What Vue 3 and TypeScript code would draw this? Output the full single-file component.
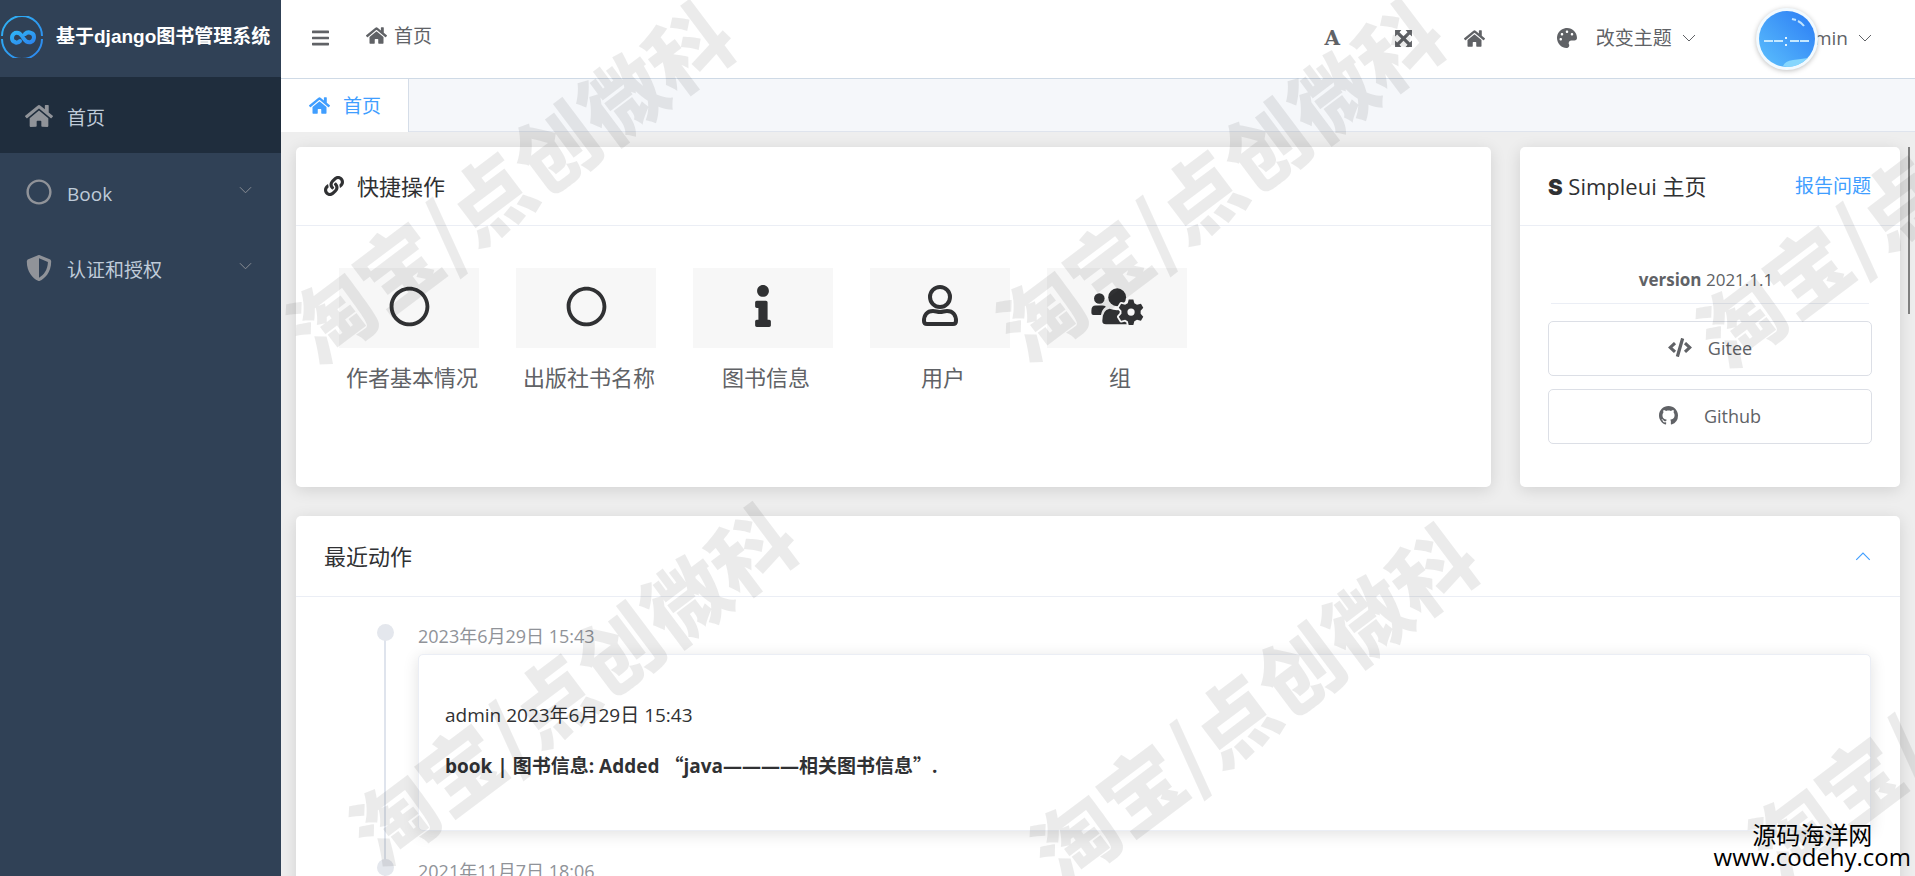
<script setup lang="ts">
import { h, ref } from 'vue'
import type { FunctionalComponent } from 'vue'

interface Glyph {
  box: string
  path: string
}

const glyphs: Record<string, Glyph> = {
  home: {
    box: '0 0 576 512',
    path: 'M280.37 148.26L96 300.11V464a16 16 0 0 0 16 16l112.06-.29a16 16 0 0 0 15.92-16V368a16 16 0 0 1 16-16h64a16 16 0 0 1 16 16v95.64a16 16 0 0 0 16 16.05L464 480a16 16 0 0 0 16-16V300L295.67 148.26a12.19 12.19 0 0 0-15.3 0zM571.6 251.47L488 182.56V44.05a12 12 0 0 0-12-12h-56a12 12 0 0 0-12 12v72.61L318.47 43a48 48 0 0 0-61 0L4.34 251.47a12 12 0 0 0-1.6 16.9l25.5 31A12 12 0 0 0 45.15 301l235.22-193.74a12.19 12.19 0 0 1 15.3 0L530.9 301a12 12 0 0 0 16.9-1.6l25.5-31a12 12 0 0 0-1.7-16.93z',
  },
  shield: {
    box: '0 0 512 512',
    path: 'M466.5 83.7l-192-80a48.15 48.15 0 0 0-36.9 0l-192 80C27.7 91.1 16 108.6 16 128c0 198.5 114.5 335.7 221.5 380.3 11.8 4.9 25.1 4.9 36.9 0C360.1 472.6 496 349.3 496 128c0-19.4-11.7-36.9-29.5-44.3zM256.1 446.3l-.1-381 175.9 73.3c-3.3 151.4-82.1 261.1-175.8 307.7z',
  },
  circle: {
    box: '0 0 512 512',
    path: 'M256 8C119 8 8 119 8 256s111 248 248 248 248-111 248-248S393 8 256 8zm0 448c-110.5 0-200-89.5-200-200S145.500 56 256 56s200 89.5 200 200-89.5 200-200 200z',
  },
  bars: {
    box: '0 0 448 512',
    path: 'M16 132h416c8.800 0 16-7.200 16-16V76c0-8.800-7.200-16-16-16H16C7.200 60 0 67.200 0 76v40c0 8.800 7.200 16 16 16zm0 160h416c8.800 0 16-7.200 16-16v-40c0-8.800-7.200-16-16-16H16c-8.800 0-16 7.200-16 16v40c0 8.800 7.200 16 16 16zm0 160h416c8.800 0 16-7.200 16-16v-40c0-8.800-7.200-16-16-16H16c-8.800 0-16 7.200-16 16v40c0 8.800 7.200 16 16 16z',
  },
  link: {
    box: '0 0 512 512',
    path: 'M326.612 185.391c59.747 59.809 58.927 155.698.36 214.590-.11.12-.24.25-.36.37l-67.2 67.2c-59.270 59.270-155.699 59.262-214.960 0-59.270-59.260-59.270-155.700 0-214.960l37.106-37.106c9.840-9.840 26.786-3.300 27.294 10.606.648 17.722 3.826 35.527 9.690 52.721 1.986 5.822.567 12.262-3.783 16.612l-13.087 13.087c-28.026 28.026-28.905 73.660-1.155 101.960 28.024 28.579 74.086 28.749 102.325.51l67.2-67.190c28.191-28.191 28.073-73.757 0-101.830-3.701-3.694-7.429-6.564-10.341-8.569a16.037 16.037 0 0 1-6.947-12.606c-.396-10.567 3.348-21.456 11.698-29.806l21.054-21.055c5.521-5.521 14.182-6.199 20.584-1.731a152.482 152.482 0 0 1 20.522 17.197zM467.547 44.449c-59.261-59.262-155.690-59.270-214.960 0l-67.2 67.2c-.12.12-.25.25-.36.37-58.566 58.892-59.387 154.781.36 214.590a152.454 152.454 0 0 0 20.521 17.196c6.402 4.468 15.064 3.789 20.584-1.731l21.054-21.055c8.350-8.350 12.094-19.239 11.698-29.806a16.037 16.037 0 0 0-6.947-12.606c-2.912-2.005-6.640-4.875-10.341-8.569-28.073-28.073-28.191-73.639 0-101.830l67.2-67.190c28.239-28.239 74.300-28.069 102.325.51 27.750 28.300 26.872 73.934-1.155 101.960l-13.087 13.087c-4.350 4.350-5.769 10.790-3.783 16.612 5.864 17.194 9.042 34.999 9.690 52.721.509 13.906 17.454 20.446 27.294 10.606l37.106-37.106c59.271-59.259 59.271-155.699.001-214.959z',
  },
  palette: {
    box: '0 0 512 512',
    path: 'M204.3 5C104.900 24.400 24.800 104.300 5.200 203.400c-37 187 131.700 326.400 258.800 306.700 41.200-6.400 61.400-54.600 42.500-91.700-23.100-45.400 9.900-98.400 60.900-98.400h79.700c35.800 0 64.800-29.600 64.900-65.300C511.500 97.100 368.100-26.900 204.300 5zM96 320c-17.700 0-32-14.300-32-32s14.300-32 32-32 32 14.300 32 32-14.300 32-32 32zm32-128c-17.700 0-32-14.300-32-32s14.300-32 32-32 32 14.300 32 32-14.300 32-32 32zm128-64c-17.700 0-32-14.300-32-32s14.300-32 32-32 32 14.300 32 32-14.300 32-32 32zm128 64c-17.700 0-32-14.300-32-32s14.300-32 32-32 32 14.300 32 32-14.300 32-32 32z',
  },
  expand: {
    box: '0 0 18 18',
    path: 'M1 1h6L5.200 3 9 6.900 12.800 3 11 1h6v6l-2-1.800L11.100 9l3.900 3.800 2-1.800v6h-6l1.800-2L9 11.100 5.200 15 7 17H1v-6l2 1.800L6.900 9 3 5.200 1 7z',
  },
  info: {
    box: '0 0 192 512',
    path: 'M20 424.229h20V279.771H20c-11.046 0-20-8.954-20-20V212c0-11.046 8.954-20 20-20h112c11.046 0 20 8.954 20 20v212.229h20c11.046 0 20 8.954 20 20V492c0 11.046-8.954 20-20 20H20c-11.046 0-20-8.954-20-20v-47.771c0-11.046 8.954-20 20-20zM96 0C56.235 0 24 32.235 24 72s32.235 72 72 72 72-32.235 72-72S135.764 0 96 0z',
  },
  code: {
    box: '0 0 640 512',
    path: 'M278.900 511.500l-61-17.700c-6.400-1.800-10-8.500-8.200-14.900L346.200 8.700c1.800-6.400 8.500-10 14.900-8.200l61 17.700c6.400 1.800 10 8.500 8.200 14.900L293.800 503.300c-1.900 6.400-8.500 10.100-14.900 8.200zm-114-112.200l43.500-46.400c4.600-4.900 4.300-12.700-.8-17.200L117 256l90.600-79.700c5.100-4.500 5.500-12.300.8-17.200l-43.500-46.400c-4.500-4.800-12.100-5.100-17-.5L3.800 247.200c-5.100 4.700-5.100 12.800 0 17.500l144.100 135.100c4.900 4.600 12.500 4.400 17-.5zm327.200.6l144.100-135.100c5.100-4.700 5.100-12.800 0-17.500L492.100 112.100c-4.800-4.500-12.400-4.300-17 .5L431.600 159c-4.600 4.900-4.300 12.700.8 17.200L523 256l-90.600 79.700c-5.100 4.500-5.500 12.300-.8 17.200l43.500 46.400c4.500 4.900 12.100 5.100 17 .6z',
  },
  github: {
    box: '0 0 16 16',
    path: 'M8 0C3.580 0 0 3.580 0 8c0 3.540 2.290 6.530 5.470 7.590.4.07.55-.17.55-.38 0-.19-.01-.82-.01-1.490-2.010.37-2.530-.49-2.690-.94-.09-.23-.48-.94-.82-1.130-.28-.15-.68-.52-.01-.53.63-.01 1.080.58 1.230.82.72 1.210 1.870.87 2.330.66.07-.52.28-.87.51-1.070-1.780-.2-3.640-.89-3.640-3.950 0-.87.31-1.590.82-2.150-.08-.2-.36-1.020.08-2.120 0 0 .67-.21 2.200.82.64-.18 1.320-.27 2-.27.68 0 1.360.09 2 .27 1.530-1.040 2.200-.82 2.200-.82.44 1.100.16 1.920.08 2.120.51.56.82 1.270.82 2.150 0 3.070-1.870 3.750-3.650 3.950.29.25.54.73.54 1.480 0 1.070-.01 1.930-.01 2.200 0 .21.15.46.55.38A8.013 8.013 0 0 0 16 8c0-4.420-3.580-8-8-8z',
  },
}

const Icon: FunctionalComponent<{ name: string }> = (props) =>
  h('svg', { viewBox: glyphs[props.name].box, fill: 'currentColor', 'aria-hidden': 'true' }, [
    h('path', { d: glyphs[props.name].path }),
  ])
Icon.props = ['name']

const Chevron: FunctionalComponent = () =>
  h('svg', { viewBox: '0 0 14 8', fill: 'none', stroke: 'currentColor', 'aria-hidden': 'true' }, [
    h('path', { d: 'M1 1l6 6 6-6' }),
  ])

const menu = [
  { label: '首页', icon: 'home', active: true, children: false },
  { label: 'Book', icon: 'circle', active: false, children: true },
  { label: '认证和授权', icon: 'shield', active: false, children: true },
]

const shortcuts = [
  { label: '作者基本情况', icon: 'circle' },
  { label: '出版社书名称', icon: 'circle' },
  { label: '图书信息', icon: 'info' },
  { label: '用户', icon: 'user' },
  { label: '组', icon: 'group' },
]

const actions = [
  {
    time: '2023年6月29日 15:43',
    user: 'admin',
    target: 'book | 图书信息: Added ',
    name: 'java————相关图书信息',
    end: '.',
  },
  { time: '2021年11月7日 18:06', user: 'admin', target: '', name: '', end: '' },
]

const marks = [
  { x: 508, y: 180 },
  { x: 1218, y: 178 },
  { x: 1918, y: 184 },
  { x: 571, y: 682 },
  { x: 1252, y: 702 },
  { x: 1970, y: 695 },
]

const open = ref(true)
</script>

<template>
  <div class="shell">
    <aside class="sidebar">
      <div class="brand">
        <svg class="logo" viewBox="0 0 42 42" fill="none" aria-hidden="true">
          <defs>
            <linearGradient id="brandTone" x1="0" y1="0" x2="1" y2="1">
              <stop offset="0" stop-color="#2fb4f5" />
              <stop offset="1" stop-color="#2d86ee" />
            </linearGradient>
          </defs>
          <path d="M1 20a20 20 0 0 1 40 0M41 23a20 20 0 0 1-40 0" stroke="url(#brandTone)" stroke-width="2" />
          <path d="M19 25c-2 2-4 2-5 1-4-1-4-7 0-9 3-1 5 0 7 3l2 3c2 3 4 4 7 3 4-2 4-8 0-9-2-1-4-1-6 1" stroke="url(#brandTone)" stroke-width="4" stroke-linecap="round" />
        </svg>
        <span class="brand-name">基于django图书管理系统</span>
      </div>
      <nav class="menu">
        <a v-for="m in menu" :key="m.label" href="#" class="menu-item" :class="{ active: m.active }">
          <Icon class="menu-icon" :name="m.icon" />
          <span class="menu-text">{{ m.label }}</span>
          <Chevron v-if="m.children" class="menu-arrow" />
        </a>
      </nav>
    </aside>

    <div class="main">
      <header class="topbar">
        <button class="plain" type="button" aria-label="折叠菜单"><Icon class="ic-bars" name="bars" /></button>
        <a class="crumb" href="#"><Icon class="ic-home" name="home" />首页</a>
        <div class="tools">
          <button class="plain tool letter" type="button">A</button>
          <button class="plain tool" type="button" aria-label="全屏"><Icon class="ic-expand" name="expand" /></button>
          <button class="plain tool" type="button" aria-label="主页"><Icon class="ic-home" name="home" /></button>
          <button class="plain theme" type="button">
            <Icon class="ic-palette" name="palette" />改变主题<Chevron class="ic-down" />
          </button>
          <button class="plain user" type="button">admin<Chevron class="ic-down" /></button>
        </div>
        <div class="ball">
          <svg viewBox="0 0 56 56" aria-hidden="true">
            <defs>
              <linearGradient id="ballTone" x1="1" y1="0" x2="0" y2="1">
                <stop offset="0" stop-color="#2a7bf4" />
                <stop offset="1" stop-color="#5cc0fd" />
              </linearGradient>
            </defs>
            <circle cx="28" cy="28" r="28" fill="url(#ballTone)" />
            <path d="M24 55q2-5 10-6t15-2q-9 9-21 9z" fill="#86d6fd" />
            <path d="M33 8l4 1M39 10q4 2 6 5" stroke="#bfe3ff" stroke-width="2" fill="none" />
            <path d="M5 30h9M15 30h9M31 30h9M41 30h9" stroke="#c4e8ff" stroke-width="2" />
            <path d="M26 26h2v2h-2zM26 33h2v2h-2z" fill="#e4f5ff" />
          </svg>
        </div>
      </header>

      <div class="tabs">
        <a class="tab" href="#"><Icon class="ic-home" name="home" />首页</a>
      </div>

      <main class="content">
        <div class="row">
          <section class="card quick">
            <h2 class="card-head"><Icon class="ic-link" name="link" />快捷操作</h2>
            <div class="shortcuts">
              <a v-for="s in shortcuts" :key="s.label" class="shortcut" href="#">
                <span class="tile">
                  <svg v-if="s.icon === 'user'" class="big-user" viewBox="0 0 36 42" fill="none" stroke="currentColor" stroke-width="4" aria-hidden="true">
                    <circle cx="18" cy="12" r="10" />
                    <path d="M5 39h26q3 0 3-3c0-6-3-10-9-10-3 0-4 1-7 1s-4-1-7-1c-6 0-9 4-9 10q0 3 3 3z" />
                  </svg>
                  <svg v-else-if="s.icon === 'group'" class="big-group" viewBox="0 0 160 112" aria-hidden="true">
                    <g fill="currentColor">
                      <circle cx="25" cy="32" r="16" />
                      <path d="M14 53h20q7 0 11 4-13 8-15 25H7q-6 0-6-6v-8q0-15 13-15z" />
                      <circle cx="79" cy="28" r="27" />
                      <path d="M56 63q23 9 44 0 18 4 22 24v23H45q-11 0-11-10 0-33 22-37z" />
                    </g>
                    <g fill="currentColor" stroke="#f7f7f7" stroke-width="11" paint-order="stroke" stroke-linejoin="round">
                      <path d="M114 35h14l3 11 8 5 12-3 7 12-8 9v9l8 9-7 12-12-3-8 5-3 11h-14l-3-11-8-5-12 3-7-12 8-9v-9l-8-9 7-12 12 3 8-5z" />
                    </g>
                    <circle cx="121" cy="73" r="11" fill="#f7f7f7" />
                  </svg>
                  <Icon v-else :class="s.icon === 'info' ? 'big-info' : 'big-circle'" :name="s.icon" />
                </span>
                <span class="shortcut-label">{{ s.label }}</span>
              </a>
            </div>
          </section>

          <section class="card about">
            <div class="card-head">
              <h2 class="about-title"><span class="letter-s">S</span> Simpleui 主页</h2>
              <a class="report" href="#">报告问题</a>
            </div>
            <div class="about-body">
              <p class="version"><b>version</b> 2021.1.1</p>
              <button class="outline" type="button"><Icon class="ic-code" name="code" />Gitee</button>
              <button class="outline github" type="button"><Icon class="ic-github" name="github" />Github</button>
            </div>
          </section>
        </div>

        <section class="card recent">
          <div class="card-head recent-head">
            <h2 class="recent-title">最近动作</h2>
            <button class="plain fold" type="button" aria-label="收起" @click="open = !open">
              <Chevron class="ic-up" />
            </button>
          </div>
          <ol v-if="open" class="timeline">
            <li v-for="a in actions" :key="a.time" class="event">
              <span class="dot"></span>
              <time class="stamp">{{ a.time }}</time>
              <div class="card event-card">
                <p class="event-line">{{ a.user }} {{ a.time }}</p>
                <p v-if="a.target" class="event-line strong">
                  {{ a.target }}<span class="han">“</span>{{ a.name }}<span class="han">”</span>{{ a.end }}
                </p>
              </div>
            </li>
          </ol>
        </section>
        <span class="scroll-thumb"></span>
      </main>
    </div>

    <div class="marks" aria-hidden="true">
      <span v-for="(m, i) in marks" :key="i" class="mark" :style="{ left: m.x + 'px', top: m.y + 'px' }">淘宝/点创微科</span>
    </div>
    <div class="site"><span>源码海洋网</span><span>www.codehy.com</span></div>
  </div>
</template>

<style>
body {
  margin: 0;
  overflow: hidden;
}
</style>

<style scoped>
* {
  box-sizing: border-box;
}
.shell {
  position: relative;
  display: flex;
  height: 100vh;
  overflow: hidden;
  font-family: "Open Sans", "Noto Sans CJK SC", sans-serif;
  font-size: 19px;
  line-height: 24px;
  color: #303133;
}
svg {
  display: block;
  flex: none;
}
a {
  color: inherit;
  text-decoration: none;
}
h2,
p {
  margin: 0;
  font-weight: 400;
}
.plain {
  display: flex;
  align-items: center;
  padding: 0;
  border: 0;
  background: none;
  font: inherit;
  color: inherit;
}
.sidebar {
  flex: none;
  width: 281px;
  background: #304156;
  color: #bfcbd9;
}
.brand {
  display: flex;
  align-items: center;
  gap: 13px;
  height: 77px;
  padding: 0 1px 3px;
}
.logo {
  width: 42px;
  height: 42px;
}
.brand-name {
  font-family: "Liberation Sans", "Noto Sans CJK SC", sans-serif;
  font-weight: 700;
  color: #fff;
  white-space: nowrap;
}
.menu-item {
  display: flex;
  align-items: center;
  height: 76px;
  padding: 6px 29px 0 25px;
}
.menu-icon {
  width: 28px;
  height: 26px;
  margin-bottom: 4px;
  color: #909399;
}
.menu-item.active {
  background: #1f2d3d;
}
.menu-text {
  flex: 1;
  margin-left: 14px;
}
.menu-arrow {
  width: 13px;
  height: 8px;
  margin-bottom: 8px;
  color: #909399;
}
.main {
  flex: 1;
  display: flex;
  flex-direction: column;
  min-width: 0;
  background: #eee;
}
.topbar {
  position: relative;
  display: flex;
  align-items: center;
  flex: none;
  height: 79px;
  padding: 0 43px 2px 31px;
  border-bottom: 1px solid #cfdae6;
  background: #fff;
  color: #606266;
}
.ic-bars {
  width: 17px;
  height: 20px;
}
.ic-home {
  width: 21px;
  height: 19px;
}
.crumb {
  display: flex;
  align-items: center;
  gap: 7px;
  margin: 0 0 5px 37px;
}
.tools {
  display: flex;
  align-items: center;
  margin-left: auto;
}
.tool {
  justify-content: center;
  width: 71px;
}
.letter {
  font-family: "DejaVu Serif", serif;
  font-size: 20px;
  font-weight: 700;
}
.ic-expand {
  width: 19px;
  height: 19px;
}
.theme {
  margin-left: 47px;
}
.ic-palette {
  width: 20px;
  height: 20px;
  margin-right: 19px;
}
.ic-down {
  width: 14px;
  height: 8px;
  margin-left: 10px;
}
.user {
  margin-left: 96px;
}
.ball {
  position: absolute;
  top: 8px;
  right: 97px;
  padding: 3px;
  border-radius: 50%;
  background: #f2faff;
  box-shadow: 0 1px 5px rgba(0, 0, 0, 0.25);
}
.ball svg {
  width: 56px;
  height: 56px;
}
.tabs {
  display: flex;
  flex: none;
  height: 53px;
  border-bottom: 1px solid #dfe4ed;
  background: #f5f7fa;
}
.tab {
  display: flex;
  align-items: center;
  gap: 13px;
  height: 53px;
  padding: 0 27px 0 28px;
  border-right: 1px solid #d5dde8;
  background: #fff;
  color: #409eff;
}
.content {
  position: relative;
  flex: 1;
  min-height: 0;
  padding: 15px 15px 0;
  overflow: hidden;
}
.row {
  display: flex;
  gap: 29px;
  margin-bottom: 29px;
}
.card {
  border-radius: 5px;
  background: #fff;
  box-shadow: 0 3px 16px rgba(0, 0, 0, 0.12);
}
.card-head {
  display: flex;
  align-items: center;
  height: 79px;
  padding: 0 29px 0 28px;
  border-bottom: 1px solid #ebeef5;
  font-size: 22px;
}
.recent-head {
  height: 81px;
}
.quick {
  flex: 1;
  height: 340px;
}
.ic-link {
  width: 20px;
  height: 20px;
  margin-right: 13px;
}
.shortcuts {
  display: flex;
  flex-wrap: wrap;
  gap: 37px;
  padding: 42px 43px;
}
.shortcut {
  width: 140px;
}
.tile {
  display: flex;
  align-items: center;
  justify-content: center;
  height: 80px;
  padding-bottom: 4px;
  background: #f7f7f7;
}
.shortcut-label {
  display: block;
  padding: 14px 0 0 6px;
  font-size: 22px;
  line-height: 30px;
  text-align: center;
  white-space: nowrap;
  color: #606266;
}
.big-circle {
  width: 41px;
  height: 41px;
}
.big-info {
  width: 16px;
  height: 42px;
}
.big-user {
  width: 36px;
  height: 42px;
}
.big-group {
  width: 53px;
  height: 37px;
}
.about {
  flex: none;
  width: 380px;
}
.about-title,
.recent-title {
  font-size: 22px;
}
.letter-s {
  font-family: Inter, sans-serif;
  font-weight: 900;
}
.report {
  margin-left: auto;
  font-size: 19px;
  color: #409eff;
}
.about-body {
  display: flex;
  flex-direction: column;
  gap: 13px;
  padding: 42px 28px;
}
.version {
  height: 36px;
  margin: 0 3px 4px;
  padding-right: 8px;
  border-bottom: 1px solid #ebeef5;
  font-size: 17px;
  text-align: center;
  color: #606266;
}
.outline {
  display: flex;
  align-items: center;
  justify-content: center;
  gap: 16px;
  height: 55px;
  padding-bottom: 3px;
  border: 1px solid #dcdfe6;
  border-radius: 5px;
  background: #fff;
  font: inherit;
  font-size: 18px;
  color: #606266;
}
.github {
  gap: 26px;
}
.ic-code {
  width: 24px;
  height: 19px;
}
.ic-github {
  width: 19px;
  height: 19px;
}
.fold {
  margin-left: auto;
  color: #409eff;
}
.ic-up {
  width: 16px;
  height: 9px;
  transform: rotate(180deg);
}
.timeline {
  margin: 0;
  padding: 27px 29px 0 81px;
  list-style: none;
}
.event {
  position: relative;
  padding: 0 0 28px 41px;
}
.event::before {
  content: "";
  position: absolute;
  top: 8px;
  bottom: -8px;
  left: 7px;
  width: 2px;
  background: #dfe4ed;
}
.dot {
  position: absolute;
  top: 0;
  left: 0;
  width: 17px;
  height: 17px;
  border-radius: 50%;
  background: #e4e7ed;
}
.stamp {
  display: block;
  height: 30px;
  font-size: 18px;
  color: #909399;
}
.event-card {
  height: 177px;
  padding: 36px 26px;
  border: 1px solid #ebeef5;
}
.event-line {
  height: 50px;
  line-height: 48px;
}
.strong {
  font-weight: 700;
}
.han {
  font-family: "Noto Sans CJK SC", sans-serif;
}
.scroll-thumb {
  position: absolute;
  top: 15px;
  right: 5px;
  width: 2px;
  height: 167px;
  background: #7f7f7f;
}
.marks {
  position: absolute;
  inset: 0;
  overflow: hidden;
  pointer-events: none;
}
.mark {
  position: absolute;
  transform: translate(-50%, -50%) rotate(-37deg);
  font-family: "Noto Sans CJK SC", sans-serif;
  font-size: 83px;
  font-weight: 900;
  line-height: 83px;
  white-space: nowrap;
  color: rgba(0, 0, 0, 0.08);
}
.site {
  position: absolute;
  right: 4px;
  bottom: 8px;
  display: flex;
  flex-direction: column;
  align-items: center;
  font-size: 24px;
  line-height: 22px;
  color: #000;
}
</style>
